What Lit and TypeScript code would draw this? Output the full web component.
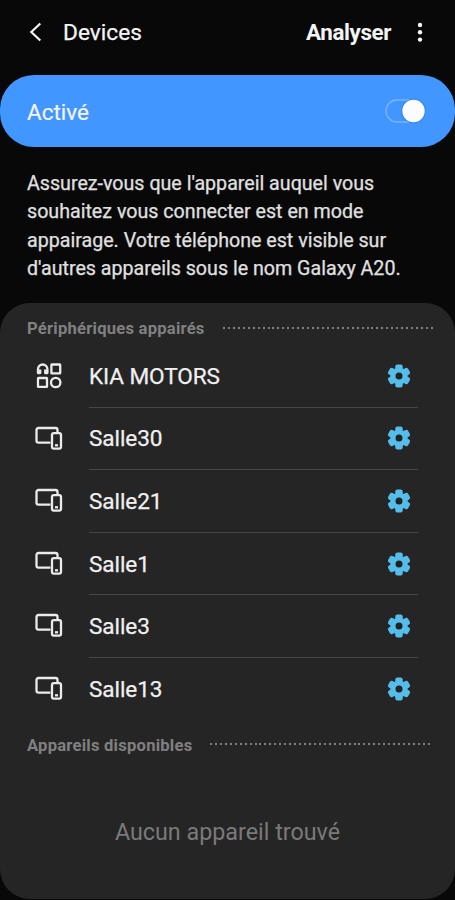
import { LitElement, html, css, svg } from "lit";
import { customElement, property } from "lit/decorators.js";

type DeviceKind = "misc" | "screen";
interface Device { name: string; kind: DeviceKind; }

const DEVICES: Device[] = [
  { name: "KIA MOTORS", kind: "misc" },
  { name: "Salle30", kind: "screen" },
  { name: "Salle21", kind: "screen" },
  { name: "Salle1", kind: "screen" },
  { name: "Salle3", kind: "screen" },
  { name: "Salle13", kind: "screen" },
];

const miscIcon = svg`
  <path d="M3 7.2a4.7 4.7 0 0 1 9.4 0V11H10.200V7.500M3 7.200V11H5.200V7.500" />
  <rect x="16.400" y="2.500" width="8.800" height="8.800" rx=".4" />
  <rect x="3" y="16" width="9" height="8.800" rx=".4" />
  <circle cx="20.700" cy="20.500" r="4.700" />`;

const screenIcon = svg`
  <path d="M15.500 17.700H3.400a1.900 1.900 0 0 1-1.900-1.900V4.900A1.900 1.900 0 0 1 3.400 3h17.200a1.900 1.900 0 0 1 1.900 1.900v2" />
  <rect x="17" y="8.200" width="9" height="15.400" rx="1.800" />
  <path d="M20 20.300h3" />`;

@customElement("section-title")
class SectionTitle extends LitElement {
  @property() label = "";
  static styles = css`
    :host { display: flex; align-items: center; height: 24px; padding: 0 22px 0 27px; gap: 18px; }
    .label { font-size: 16.6px; letter-spacing: 0.23px; font-weight: 700; color: #808080; line-height: 24px; padding-top: 2px; white-space: nowrap; }
    .dots { flex: 1; height: 2px; margin-top: -1px;
      background: repeating-linear-gradient(90deg, #808080 0 2px, transparent 2px 4.95px); }
  `;
  render() {
    return html`<span class="label">${this.label}</span><span class="dots"></span>`;
  }
}

@customElement("device-row")
class DeviceRow extends LitElement {
  @property({ attribute: false }) device!: Device;
  static styles = css`
    :host { display: flex; height: 62.6px; padding: 0 37px 0 35px; }
    .icon { width: 28px; height: 28px; margin: 17px 26px 0 0; fill: none; stroke: #ebebeb; stroke-width: 2.3; stroke-linejoin: round; }
    .body { flex: 1; display: flex; justify-content: space-between; align-items: center;
      border-bottom: 1.5px solid #464646; box-sizing: border-box; }
    :host(.last) .body { border-bottom-color: transparent; }
    .name { font-size: 22.6px; letter-spacing: -0.1px; color: #f0f0f0; line-height: 30px; padding-top: 2px; -webkit-text-stroke: 0.25px; }
    .gear { width: 24px; height: 24px; margin-right: 7px; fill: #55bdea; }
    .hole { fill: #222; }
  `;
  render() {
    return html`
      <svg class="icon" viewBox="0 0 28 28">${this.device.kind === "misc" ? miscIcon : screenIcon}</svg>
      <div class="body">
        <span class="name">${this.device.name}</span>
        <svg class="gear" viewBox="0 0 24 24">
          ${[0, 60, 120].map((a) => svg`<rect x="8.300" y=".5" width="7.400" height="23" rx="2" transform="rotate(${a} 12 12)" />`)}
          <circle cx="12" cy="12" r="8.600" />
          <circle class="hole" cx="12" cy="12" r="3.500" />
        </svg>
      </div>`;
  }
}

@customElement("app-root")
class AppRoot extends LitElement {
  static styles = css`
    :host { display: flex; flex-direction: column; height: 900px; background: #080808; color: #f4f4f4;
      font-family: Roboto, "Liberation Sans", sans-serif; overflow: hidden; }
    .bar { display: flex; align-items: center; height: 65px; margin-bottom: 10px; padding: 0 32px 0 28px; }
    .back { width: 15px; height: 20px; margin: -2px 20px 0 0; fill: none; stroke: #f4f4f4; stroke-width: 2.2; }
    .title { flex: 1; font-size: 22.7px; line-height: 30px; -webkit-text-stroke: 0.25px; }
    .scan { font-size: 22.4px; letter-spacing: -0.4px; font-weight: 700; line-height: 30px; margin-top: -1px; }
    .more { width: 6px; height: 20px; margin: -2px 0 0 26px; fill: #f4f4f4; }
    .switch-bar { display: flex; align-items: center; justify-content: space-between; height: 72px;
      box-sizing: border-box; padding: 1px 29px 0 27px; border-radius: 34px; background: #4296ff; }
    .state { font-size: 22.5px; line-height: 30px; padding-top: 1px; -webkit-text-stroke: 0.2px; }
    .toggle { width: 41px; height: 26px; margin-top: -1px; }
    .hint { margin: 23px 27px 0; height: 113px; font-size: 19.65px; line-height: 28.3px; color: #e0e0e0;
      white-space: pre-line; -webkit-text-stroke: 0.25px; }
    .panel { margin-top: 20px; height: 596px; border-radius: 30px; background: #252525; box-sizing: border-box; padding-top: 13px; }
    .list { padding: 5px 0 12px; }
    .empty { margin-top: 60px; text-align: center; font-size: 23.3px; line-height: 30px; color: #7a7a7a; }
  `;
  render() {
    return html`
      <header class="bar">
        <svg class="back" viewBox="0 0 15 20"><path d="M12.300 1.500 3.300 10l9 8.500" /></svg>
        <span class="title">Devices</span>
        <span class="scan">Analyser</span>
        <svg class="more" viewBox="0 0 6 20"><circle cx="3" cy="3" r="2.200" /><circle cx="3" cy="10.300" r="2.200" /><circle cx="3" cy="17.600" r="2.200" /></svg>
      </header>
      <div class="switch-bar">
        <span class="state">Activé</span>
        <svg class="toggle" viewBox="0 0 41 26">
          <rect x="1" y="2" width="38" height="22" rx="11" fill="none" stroke="#7ab5ff" stroke-width="1.300" />
          <circle cx="28.500" cy="13" r="12.300" fill="#3685ea" />
          <circle cx="28.500" cy="13" r="11.200" fill="#fafcff" />
        </svg>
      </div>
      <p class="hint">Assurez-vous que l'appareil auquel vous
souhaitez vous connecter est en mode
appairage. Votre téléphone est visible sur
d'autres appareils sous le nom Galaxy A20.</p>
      <section class="panel">
        <section-title label="Périphériques appairés"></section-title>
        <div class="list">
          ${DEVICES.map((d, i) => html`<device-row class=${i === DEVICES.length - 1 ? "last" : ""} .device=${d}></device-row>`)}
        </div>
        <section-title label="Appareils disponibles"></section-title>
        <div class="empty">Aucun appareil trouvé</div>
      </section>`;
  }
}
